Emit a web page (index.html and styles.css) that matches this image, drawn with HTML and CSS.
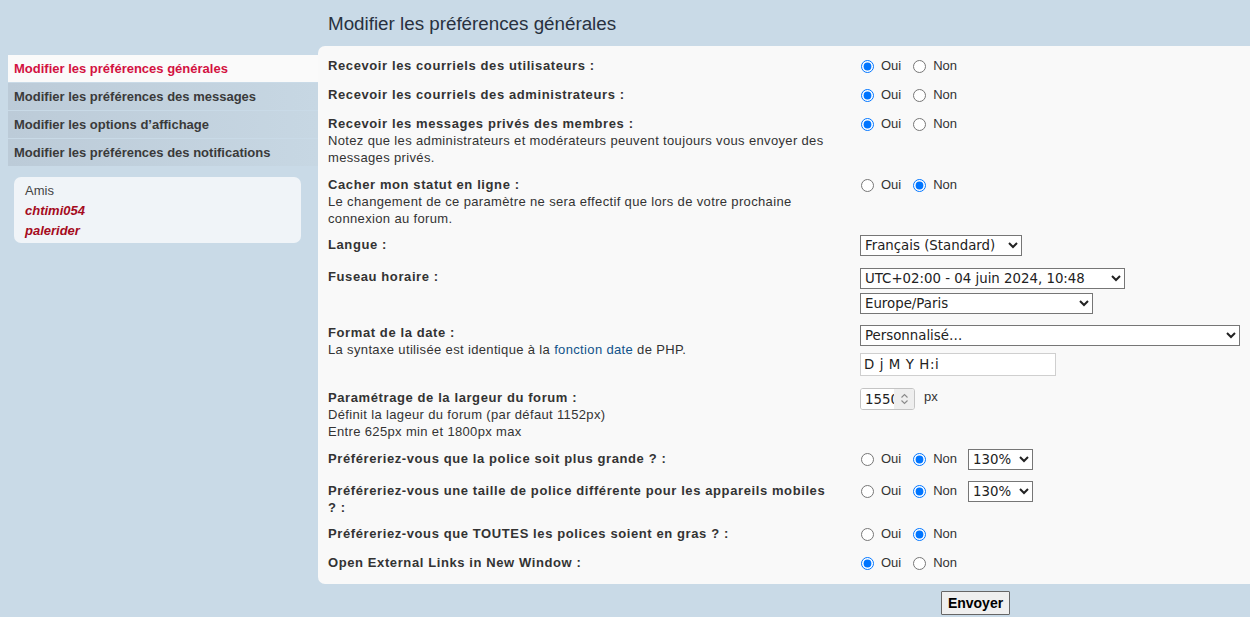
FILE: index.html
```html
<!DOCTYPE html>
<html lang="fr">
<head>
<meta charset="utf-8">
<title>Modifier les préférences générales</title>
<link rel="stylesheet" href="styles.css">
</head>
<body>
<div class="page">
  <nav class="side">
    <ul class="tabs">
      <li class="tab active"><a href="#">Modifier les préférences générales</a></li>
      <li class="tab"><a href="#">Modifier les préférences des messages</a></li>
      <li class="tab"><a href="#">Modifier les options d’affichage</a></li>
      <li class="tab"><a href="#">Modifier les préférences des notifications</a></li>
    </ul>
    <div class="friends">
      <div class="friends-title">Amis</div>
      <a class="friend" href="#">chtimi054</a>
      <a class="friend" href="#">palerider</a>
    </div>
  </nav>
  <main class="content">
    <h2 class="title">Modifier les préférences générales</h2>
    <form class="form">
      <div class="panel">
        <dl class="row">
          <dt><label>Recevoir les courriels des utilisateurs :</label></dt>
          <dd><label class="radio"><input type="radio" name="r1" checked> Oui</label><label class="radio"><input type="radio" name="r1"> Non</label></dd>
        </dl>
        <dl class="row">
          <dt><label>Recevoir les courriels des administrateurs :</label></dt>
          <dd><label class="radio"><input type="radio" name="r2" checked> Oui</label><label class="radio"><input type="radio" name="r2"> Non</label></dd>
        </dl>
        <dl class="row">
          <dt><label>Recevoir les messages privés des membres :</label><span class="explain">Notez que les administrateurs et modérateurs peuvent toujours vous envoyer des messages privés.</span></dt>
          <dd><label class="radio"><input type="radio" name="r3" checked> Oui</label><label class="radio"><input type="radio" name="r3"> Non</label></dd>
        </dl>
        <dl class="row">
          <dt><label>Cacher mon statut en ligne :</label><span class="explain">Le changement de ce paramètre ne sera effectif que lors de votre prochaine connexion au forum.</span></dt>
          <dd><label class="radio"><input type="radio" name="r4"> Oui</label><label class="radio"><input type="radio" name="r4" checked> Non</label></dd>
        </dl>
        <dl class="row">
          <dt><label>Langue :</label></dt>
          <dd><select class="sel sel-lang"><option>Français (Standard)</option></select></dd>
        </dl>
        <dl class="row">
          <dt><label>Fuseau horaire :</label></dt>
          <dd class="stack">
            <select class="sel sel-utc"><option>UTC+02:00 - 04 juin 2024, 10:48</option></select>
            <select class="sel sel-tz"><option>Europe/Paris</option></select>
          </dd>
        </dl>
        <dl class="row">
          <dt><label>Format de la date :</label><span class="explain">La syntaxe utilisée est identique à la <a href="#">fonction date</a> de PHP.</span></dt>
          <dd class="stack">
            <select class="sel sel-date"><option>Personnalisé…</option></select>
            <input class="text-input" type="text" value="D j M Y H:i">
          </dd>
        </dl>
        <dl class="row">
          <dt><label>Paramétrage de la largeur du forum :</label><span class="explain">Définit la lageur du forum (par défaut 1152px)<br>Entre 625px min et 1800px max</span></dt>
          <dd><div class="num-wrap"><input class="num-input" type="text" value="1550"><span class="spin"><svg width="9" height="14" viewBox="0 0 9 14"><path d="M1.5 5.5 L4.5 2.5 L7.5 5.5" fill="none" stroke="#8a8a8a" stroke-width="1.1"/><path d="M1.5 8.5 L4.5 11.5 L7.5 8.5" fill="none" stroke="#8a8a8a" stroke-width="1.1"/></svg></span></div><span class="unit">px</span></dd>
        </dl>
        <dl class="row">
          <dt><label>Préféreriez-vous que la police soit plus grande ?&nbsp;:</label></dt>
          <dd><label class="radio"><input type="radio" name="r5"> Oui</label><label class="radio"><input type="radio" name="r5" checked> Non</label><select class="sel sel-pct"><option>130%</option></select></dd>
        </dl>
        <dl class="row">
          <dt><label>Préféreriez-vous une taille de police différente pour les appareils mobiles ?&nbsp;:</label></dt>
          <dd><label class="radio"><input type="radio" name="r6"> Oui</label><label class="radio"><input type="radio" name="r6" checked> Non</label><select class="sel sel-pct"><option>130%</option></select></dd>
        </dl>
        <dl class="row">
          <dt><label>Préféreriez-vous que TOUTES les polices soient en gras ?&nbsp;:</label></dt>
          <dd><label class="radio"><input type="radio" name="r7"> Oui</label><label class="radio"><input type="radio" name="r7" checked> Non</label></dd>
        </dl>
        <dl class="row">
          <dt><label>Open External Links in New Window :</label></dt>
          <dd><label class="radio"><input type="radio" name="r8" checked> Oui</label><label class="radio"><input type="radio" name="r8"> Non</label></dd>
        </dl>
      </div>
      <div class="submit">
        <button type="button" class="btn">Envoyer</button>
      </div>
    </form>
  </main>
</div>
</body>
</html>
```

FILE: styles.css
```css
html, body {
  margin: 0;
  padding: 0;
  overflow: hidden;
}
body {
  background: #c9dae7;
  font-family: "Liberation Sans", Arial, sans-serif;
  font-size: 13px;
  color: #333;
}
.page {
  display: flex;
  align-items: flex-start;
}
.side {
  width: 310px;
  flex: none;
  padding: 55px 0 0 8px;
}
.tabs {
  list-style: none;
  margin: 0;
  padding: 0;
}
.tab {
  height: 27px;
  margin-bottom: 1px;
  background: linear-gradient(to right, #bccbd8, #c7d7e3);
}
.tab a {
  display: block;
  padding-left: 6px;
  line-height: 27px;
  font-weight: bold;
  color: #3a3a3a;
  text-decoration: none;
}
.tab.active {
  background: #fafafa;
}
.tab.active a {
  color: #d31141;
}
.friends {
  margin: 11px 17px 0 6px;
  background: #f0f4f8;
  border-radius: 7px;
  padding: 4px 11px 2px;
  line-height: 20px;
}
.friends-title {
  color: #444;
}
.friend {
  display: block;
  color: #a50b1d;
  font-weight: bold;
  font-style: italic;
  text-decoration: none;
}
.content {
  flex: 1;
  min-width: 0;
}
.title {
  margin: 0;
  padding: 11px 0 0 10px;
  height: 46px;
  box-sizing: border-box;
  font-size: 18.8px;
  font-weight: normal;
  line-height: 26px;
  color: #28313f;
  font-family: "Liberation Sans", Arial, sans-serif;
}
.form {
  margin: 0;
}
.panel {
  background: #f9f9f9;
  border-radius: 7px 0 0 7px;
  padding: 11px 10px 1px 10px;
}
.row {
  display: flex;
  margin: 0 0 9px 0;
}
.row dt {
  width: 515px;
  margin-right: 17px;
  padding-bottom: 0.5px;
  line-height: 17px;
}
.row dt label {
  display: block;
  font-weight: bold;
  letter-spacing: 0.6px;
  color: #333;
}
.explain {
  display: block;
  letter-spacing: 0.35px;
  color: #333;
}
.explain a {
  color: #105289;
  text-decoration: none;
}
.row dd {
  margin: 0;
  min-height: 20px;
  line-height: 17px;
  display: flex;
  align-items: flex-start;
}
.row dd.stack {
  flex-direction: column;
}
.radio {
  display: inline-flex;
  align-items: center;
  margin-right: 11px;
  height: 17px;
  color: #333;
}
.radio input {
  margin: 2px 7px 0 1px;
  width: 13px;
  height: 13px;
}
.sel {
  font-family: "DejaVu Sans", sans-serif;
  font-size: 13.33px;
  height: 21px;
  border: 1px solid #767676;
  border-radius: 0;
  background-color: #fff;
  color: #222;
  padding: 0;
  margin: -1px 0 3px 0;
}
.sel-lang { width: 162px; }
.sel-utc { width: 265px; margin: 0 0 4px 0; }
.sel-tz { width: 233px; margin: 0 0 1px 0; }
.sel-date { width: 380px; margin: 1px 0 7px 0; }
.sel-pct { width: 65px; }
.text-input {
  width: 196px;
  height: 23px;
  box-sizing: border-box;
  border: 1px solid #cfcfcf;
  background: #fff;
  font-family: "DejaVu Sans", sans-serif;
  font-size: 13.33px;
  letter-spacing: 0.6px;
  padding: 0 3px;
  color: #222;
  margin: 0 0 4px 0;
}
.num-wrap {
  display: flex;
  width: 55px;
  height: 22px;
  box-sizing: border-box;
  border: 1px solid #c4c4c4;
  border-radius: 3px;
  background: #fff;
  overflow: hidden;
  margin-top: -1px;
}
.num-input {
  width: 33px;
  box-sizing: border-box;
  border: 0;
  padding: 0 0 0 4px;
  margin: 0;
  font-family: "DejaVu Sans", sans-serif;
  font-size: 13.33px;
  color: #222;
  background: #fff;
  outline: none;
}
.spin {
  flex: 1;
  display: flex;
  align-items: center;
  justify-content: center;
  background: #eeeeee;
}
.unit {
  margin-left: 9px;
  line-height: 17px;
  margin-top: -1px;
  color: #333;
}
.submit {
  padding: 7px 0 0 623px;
}
.btn {
  font-family: "Liberation Sans", Arial, sans-serif;
  font-size: 14px;
  font-weight: bold;
  color: #000;
  background: #efefef;
  border: 1px solid #666;
  border-radius: 1px;
  width: 69px;
  height: 24px;
  padding: 0;
}
```
